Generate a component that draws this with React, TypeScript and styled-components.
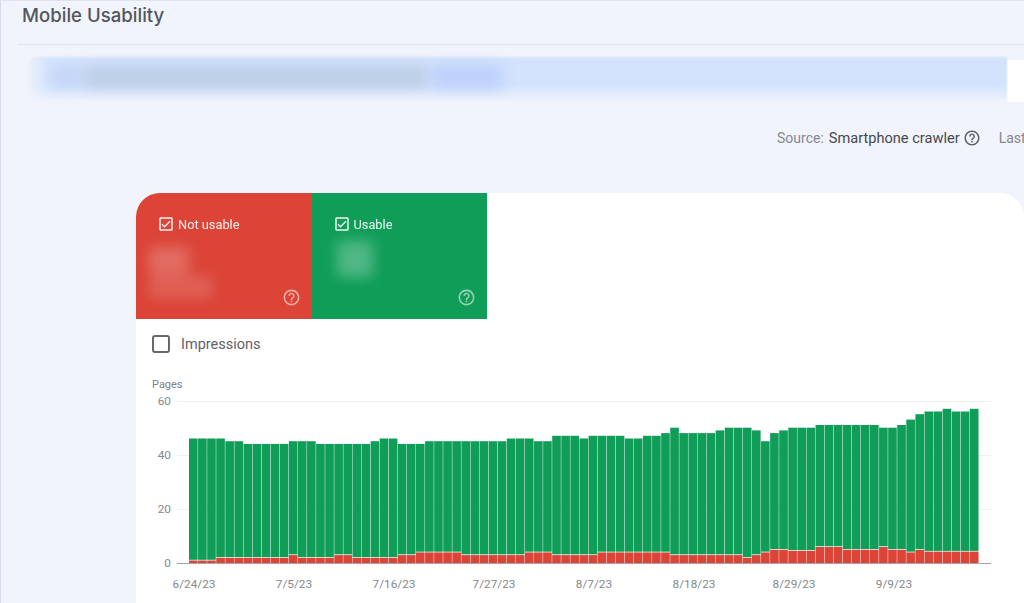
import React from 'react';
import styled, { createGlobalStyle } from 'styled-components';

const HELP_PATH =
  'M11 18h2v-2h-2v2zm1-16C6.48 2 2 6.48 2 12s4.48 10 10 10 10-4.48 10-10S17.52 2 12 2zm0 18c-4.41 0-8-3.59-8-8s3.59-8 8-8 8 3.59 8 8-3.59 8-8 8zm0-14c-2.21 0-4 1.79-4 4h2c0-1.1.9-2 2-2s2 .9 2 2c0 2-3 1.75-3 5h2c0-2.25 3-2.5 3-5 0-2.21-1.79-4-4-4z';
const CHECKED_PATH =
  'M19 3H5c-1.11 0-2 .9-2 2v14c0 1.1.89 2 2 2h14c1.11 0 2-.9 2-2V5c0-1.1-.89-2-2-2zm0 16H5V5h14v14zM17.99 9l-1.41-1.42-6.59 6.59-2.58-2.57-1.42 1.41 4 3.99z';

// [value, how many days in a row]
const TOTAL_RUNS = [
  [46, 4], [45, 2], [44, 5], [45, 3], [44, 6], [45, 1], [46, 2], [44, 3], [45, 9], [46, 3],
  [45, 2], [47, 3], [46, 1], [47, 4], [46, 2], [47, 2], [48, 1], [50, 1], [48, 4], [49, 1],
  [50, 3], [49, 1], [45, 1], [48, 1], [49, 1], [50, 3], [51, 7], [50, 2], [51, 1], [53, 1],
  [55, 1], [56, 2], [57, 1], [56, 2], [57, 1],
];
const RED_RUNS = [
  [1, 3], [2, 8], [3, 1], [2, 4], [3, 2], [2, 5], [3, 2], [4, 5], [3, 7], [4, 3], [3, 5],
  [4, 8], [3, 8], [2, 1], [3, 1], [4, 1], [5, 2], [4.6, 3], [6, 3], [5, 4], [6, 1], [5, 2],
  [4, 1], [5, 1], [4.3, 6],
];

const expand = (runs: number[][]) => runs.flatMap(([value, count]) => Array<number>(count).fill(value));
const totals = expand(TOTAL_RUNS);
const reds = expand(RED_RUNS);

const DATES = ['6/24/23', '7/5/23', '7/16/23', '7/27/23', '8/7/23', '8/18/23', '8/29/23', '9/9/23'];

// chart box starts at page x=152, y=391
const BAR_LEFT = 37;
const BAR_PITCH = 9.08;
const ZERO_Y = 172.5;
const UNIT = 2.7;
const AXIS_LEFT = 25;
const AXIS_RIGHT = 839;

const Icon: React.FC<{ path: string; size: number; color: string; opacity?: number }> = ({ path, size, color, opacity }) => (
  <IconSvg width={size} height={size} viewBox="0 0 24 24" fill={color} opacity={opacity}>
    <path d={path} />
  </IconSvg>
);

const Chart: React.FC = () => (
  <ChartSvg viewBox="0 0 872 212">
    {[60, 40, 20].map(v => (
      <line key={v} x1={AXIS_LEFT} x2={AXIS_RIGHT} y1={ZERO_Y - v * UNIT} y2={ZERO_Y - v * UNIT} stroke="#f0f0f2" />
    ))}
    {[60, 40, 20, 0].map(v => (
      <AxisText key={v} x={19} y={ZERO_Y - v * UNIT + 3.7} textAnchor="end">
        {v}
      </AxisText>
    ))}
    {totals.map((total, i) => {
      const x = BAR_LEFT + i * BAR_PITCH;
      const top = ZERO_Y - total * UNIT - 0.8;
      const redTop = ZERO_Y - reds[i] * UNIT - 1;
      return (
        <g key={i}>
          <rect x={x} y={top} width={BAR_PITCH - 0.45} height={redTop - top} fill="#0f9d58" />
          <rect x={x} y={redTop + 0.7} width={BAR_PITCH - 0.45} height={ZERO_Y - redTop - 0.7} fill="#dd4438" />
        </g>
      );
    })}
    <line x1={AXIS_LEFT} x2={AXIS_RIGHT} y1={ZERO_Y} y2={ZERO_Y} stroke="#a3a6ab" strokeWidth={1.2} />
    {DATES.map((date, i) => (
      <AxisText key={date} x={42 + i * 100} y={196.5} textAnchor="middle">
        {date}
      </AxisText>
    ))}
  </ChartSvg>
);

const App: React.FC = () => (
  <>
    <GlobalStyle />
    <Page>
      <TitleBar>
        <Title>Mobile Usability</Title>
      </TitleBar>
      <BannerRow>
        <Banner>
          <BlurBlock $width={30} $height={20} $color="#c2d5f6" $gap={0} />
          <BlurBlock $width={345} $height={22} $color="#bccde6" $gap={2} />
          <BlurBlock $width={70} $height={24} $color="#bcd0fa" $gap={3} />
        </Banner>
        <BannerEnd />
      </BannerRow>
      <SourceRow>
        <SourceLabel>Source:</SourceLabel>
        <SourceValue>Smartphone crawler</SourceValue>
        <Icon path={HELP_PATH} size={18} color="#5f6368" />
        <LastLabel>Last</LastLabel>
      </SourceRow>
      <Card>
        <Tiles>
          <Tile $color="#db4437">
            <TileHeader>
              <Icon path={CHECKED_PATH} size={18} color="#fff" />
              Not usable
            </TileHeader>
            <TileBlur $top={13} $left={-8}>
              <BlurBlock $width={40} $height={28} $color="rgba(255,255,255,0.22)" $gap={0} />
              <TileBlurLower />
            </TileBlur>
            <TileHelp>
              <Icon path={HELP_PATH} size={19} color="#fff" opacity={0.55} />
            </TileHelp>
          </Tile>
          <Tile $color="#0f9d58">
            <TileHeader>
              <Icon path={CHECKED_PATH} size={18} color="#fff" />
              Usable
            </TileHeader>
            <TileBlur $top={7} $left={4}>
              <BlurBlock $width={36} $height={36} $color="rgba(255,255,255,0.28)" $gap={0} />
            </TileBlur>
            <TileHelp>
              <Icon path={HELP_PATH} size={19} color="#fff" opacity={0.55} />
            </TileHelp>
          </Tile>
        </Tiles>
        <CardBody>
          <ImpressionsRow>
            <EmptyBox />
            Impressions
          </ImpressionsRow>
          <PagesLabel>Pages</PagesLabel>
          <Chart />
        </CardBody>
      </Card>
    </Page>
  </>
);

const GlobalStyle = createGlobalStyle`
  html, body {
    margin: 0;
    height: 100%;
    overflow: hidden;
    background: #f1f4fc;
  }
  * {
    box-sizing: border-box;
  }
`;

const Page = styled.div`
  width: 1024px;
  height: 603px;
  overflow: hidden;
  border-left: 1px solid #d6dbec;
  border-top: 1px solid #dfe3f1;
  background: #f1f4fc;
  font-family: Roboto, 'Liberation Sans', sans-serif;
  filter: blur(0.35px);
`;

const IconSvg = styled.svg`
  flex: none;
`;

const TitleBar = styled.div`
  height: 44px;
  margin-left: 17px;
  padding: 2px 0 0 4px;
  border-bottom: 1px solid #e3e5ea;
`;

const Title = styled.h1`
  margin: 0;
  font-family: Inter, sans-serif;
  font-size: 18.6px;
  line-height: 24px;
  font-weight: 500;
  color: #53565a;
`;

const BannerRow = styled.div`
  display: flex;
  height: 45px;
  margin: 12px 0 0 27px;
`;

const Banner = styled.div`
  display: flex;
  align-items: center;
  width: 979px;
  padding: 0 0 5px 24px;
  background:
    linear-gradient(90deg, rgba(241, 244, 252, 0.85) 0, rgba(241, 244, 252, 0) 22px),
    linear-gradient(#d3e3fd 0%, #d3e3fd 62%, #f0f4fc 100%);
  border-top-left-radius: 8px;
  filter: blur(1px);
`;

const BannerEnd = styled.div`
  flex: 1;
  margin-top: 3px;
  background: #fff;
`;

const BlurBlock = styled.div<{ $width: number; $height: number; $color: string; $gap: number }>`
  flex: none;
  width: ${p => p.$width}px;
  height: ${p => p.$height}px;
  margin-left: ${p => p.$gap}px;
  background: ${p => p.$color};
  filter: blur(7px);
`;

const SourceRow = styled.div`
  display: flex;
  align-items: center;
  height: 20px;
  margin-top: 26px;
  padding-left: 776px;
  font-size: 14px;
  white-space: nowrap;
`;

const SourceLabel = styled.span`
  color: #85888d;
`;

const SourceValue = styled.span`
  margin: 0 3px 0 5px;
  font-size: 14.6px;
  color: #46494d;
`;

const LastLabel = styled.span`
  margin-left: 18px;
  color: #85888d;
`;

const Card = styled.div`
  width: 888px;
  height: 420px;
  margin: 45px 0 0 135px;
  background: #fff;
  border-radius: 24px 24px 0 0;
  overflow: hidden;
`;

const Tiles = styled.div`
  display: flex;
  height: 126px;
`;

const Tile = styled.div<{ $color: string }>`
  display: flex;
  flex-direction: column;
  width: 175.5px;
  padding: 21px 11px 12px 21px;
  background: ${p => p.$color};
`;

const TileHeader = styled.div`
  display: flex;
  align-items: center;
  gap: 3px;
  height: 20px;
  font-size: 12.8px;
  color: #fff;
  opacity: 0.92;
`;

const TileBlur = styled.div<{ $top: number; $left: number }>`
  display: flex;
  flex-direction: column;
  flex: none;
  height: 36px;
  margin: ${p => p.$top}px 0 0 ${p => p.$left}px;
`;

const TileBlurLower = styled.div`
  flex: none;
  width: 64px;
  height: 24px;
  background: rgba(255, 255, 255, 0.14);
  filter: blur(6px);
`;

const TileHelp = styled.div`
  display: flex;
  justify-content: flex-end;
  margin-top: auto;
`;

const CardBody = styled.div`
  padding: 16px 0 0 16px;
`;

const ImpressionsRow = styled.div`
  display: flex;
  align-items: center;
  gap: 11px;
  height: 18px;
  font-size: 14.5px;
  color: #5f6368;
`;

const EmptyBox = styled.span`
  width: 18px;
  height: 18px;
  border: 2px solid #666a6e;
  border-radius: 3px;
`;

const PagesLabel = styled.div`
  height: 13px;
  margin-top: 25px;
  font-size: 11px;
  line-height: 14px;
  color: #7d8085;
`;

const ChartSvg = styled.svg`
  display: block;
  width: 872px;
  height: 212px;
`;

const AxisText = styled.text`
  font-family: Roboto, 'Liberation Sans', sans-serif;
  font-size: 11.8px;
  fill: #85888d;
`;

export default App;
